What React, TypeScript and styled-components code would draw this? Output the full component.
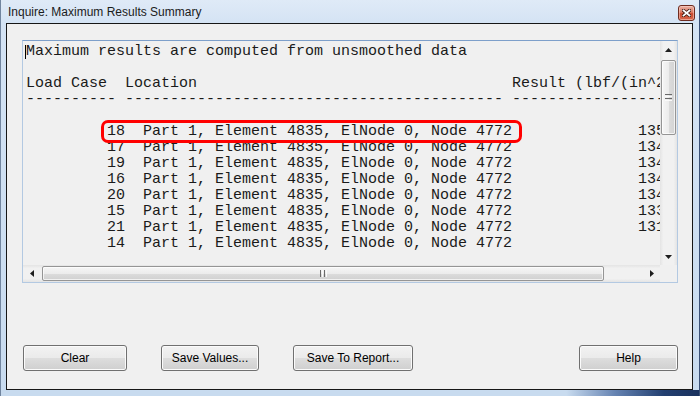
import React from 'react';
import styled, { createGlobalStyle } from 'styled-components';

const GlobalStyle = createGlobalStyle`
  html, body {
    margin: 0;
    padding: 0;
    background: #ffffff;
  }
  body {
    width: 700px;
    height: 396px;
    overflow: hidden;
  }
`;

const Window = styled.div`
  width: 700px;
  height: 396px;
  box-sizing: border-box;
  display: flex;
  flex-direction: column;
  border-left: 1px solid #71859f;
  border-right: 1px solid #3b5177;
  background:
    linear-gradient(to right, #c8dbef 0%, #c8dbef 81%, #6583b2 88%, #223f70 95%, #1a325e 100%) bottom / 100% 6px no-repeat,
    linear-gradient(to bottom, #dfeaf7 0%, #d4e3f4 24px, #c8dbef 100%);
`;

const TitleBar = styled.div`
  height: 23px;
  flex: none;
  display: flex;
  justify-content: space-between;
  align-items: flex-start;
  padding: 0 4px 0 7px;
`;

const Title = styled.span`
  margin-top: 5px;
  font-family: 'Liberation Sans', Arial, sans-serif;
  font-size: 12px;
  line-height: 15px;
  color: #1b1b1b;
`;

const CloseButton = styled.div`
  margin-top: 5px;
  width: 17px;
  height: 16px;
  box-sizing: border-box;
  border: 1px solid #6e2b1f;
  border-radius: 3px;
  background: linear-gradient(to bottom, #eab0a2 0%, #dc7c66 45%, #c9482d 55%, #d8694e 100%);
  box-shadow: inset 0 0 0 1px rgba(255, 220, 210, 0.5);
  display: flex;
  align-items: center;
  justify-content: center;
`;

const Body = styled.div`
  flex: 1;
  display: flex;
  padding: 0 6px 6px 5px;
  min-height: 0;
`;

const Content = styled.div`
  flex: 1;
  border: 1px solid #161616;
  background: #f0f0f0;
  display: flex;
  flex-direction: column;
  justify-content: space-between;
  padding: 16px 14px 18px 15px;
`;

const TextBox = styled.div`
  height: 243px;
  box-sizing: border-box;
  border: 1px solid #b3c9e2;
  border-top-color: #7d9fca;
  background: #f0f0f0;
  display: grid;
  grid-template-columns: 1fr 17px;
  grid-template-rows: 1fr 17px;
`;

const Listing = styled.div`
  position: relative;
  overflow: hidden;
  padding: 3px 0 0 3px;
  font-family: 'Liberation Mono', 'Courier New', monospace;
  font-size: 15px;
  line-height: 16px;
  white-space: pre;
  color: #1a1a1a;
`;

const Line = styled.div`
  height: 16px;
`;

const Caret = styled.span`
  display: inline-block;
  width: 1px;
  height: 14px;
  margin-left: -1px;
  margin-top: 1px;
  vertical-align: top;
  background: #000;
`;

const Highlight = styled.div`
  position: absolute;
  left: 78px;
  top: 79px;
  width: 421px;
  height: 23px;
  box-sizing: border-box;
  border: 3px solid #ff0000;
  border-radius: 7px;
  pointer-events: none;
`;

const VScroll = styled.div`
  display: flex;
  flex-direction: column;
  background: linear-gradient(to right, #e4e4e4 0%, #f1f1f1 20%, #f1f1f1 80%, #e4e4e4 100%);
`;

const HScroll = styled.div`
  display: flex;
  align-items: center;
  background: linear-gradient(to bottom, #e4e4e4 0%, #f1f1f1 20%, #f1f1f1 80%, #e4e4e4 100%);
`;

const Arrow = styled.div<{ $grow?: boolean }>`
  width: 17px;
  height: 17px;
  flex: none;
  display: flex;
  align-items: center;
  justify-content: center;
  margin-top: ${({ $grow }) => ($grow ? 'auto' : '0')};
  margin-left: ${({ $grow }) => ($grow ? 'auto' : '0')};
`;

const Thumb = styled.div<{ $vertical?: boolean; $length: number }>`
  box-sizing: border-box;
  border: 1px solid #959595;
  border-radius: 2px;
  display: flex;
  align-items: center;
  justify-content: center;
  ${({ $vertical, $length }) =>
    $vertical
      ? `
    width: 15px;
    height: ${$length}px;
    margin: 2px 1px 0;
    background: linear-gradient(to right, #f6f6f6 0%, #ececec 50%, #dcdcdc 51%, #d3d3d3 100%);
  `
      : `
    height: 15px;
    width: ${$length}px;
    margin-left: 2px;
    background: linear-gradient(to bottom, #f6f6f6 0%, #ececec 50%, #dcdcdc 51%, #d0d0d0 100%);
  `}
  box-shadow: inset 0 0 0 1px rgba(255, 255, 255, 0.7);
`;

const Corner = styled.div`
  background: #f0f0f0;
`;

const ButtonRow = styled.div`
  display: flex;
  gap: 34px;
  padding-left: 1px;
`;

const Button = styled.button<{ $width: number; $push?: boolean }>`
  width: ${({ $width }) => $width}px;
  height: 26px;
  box-sizing: border-box;
  margin: 0;
  margin-left: ${({ $push }) => ($push ? 'auto' : '0')};
  padding: 0;
  border: 1px solid #707070;
  border-radius: 3px;
  background: linear-gradient(to bottom, #f2f2f2 0%, #ebebeb 48%, #dddddd 52%, #cfcfcf 100%);
  box-shadow: inset 0 0 0 1px #fbfbfb;
  font-family: 'Liberation Sans', Arial, sans-serif;
  font-size: 12px;
  color: #000;
`;

const UpArrow = () => (
  <svg width="7" height="4" viewBox="0 0 7 4">
    <polygon points="3.5,0 7,4 0,4" fill="#1e1e1e" />
  </svg>
);

const DownArrow = () => (
  <svg width="7" height="4" viewBox="0 0 7 4">
    <polygon points="0,0 7,0 3.5,4" fill="#1e1e1e" />
  </svg>
);

const LeftArrow = () => (
  <svg width="4" height="7" viewBox="0 0 4 7">
    <polygon points="4,0 4,7 0,3.5" fill="#1e1e1e" />
  </svg>
);

const RightArrow = () => (
  <svg width="4" height="7" viewBox="0 0 4 7">
    <polygon points="0,0 4,3.5 0,7" fill="#1e1e1e" />
  </svg>
);

const Grip = ({ vertical }: { vertical?: boolean }) =>
  vertical ? (
    <svg width="7" height="7" viewBox="0 0 7 7">
      {[0, 2, 4, 6].map((y) => (
        <rect key={y} x="0" y={y} width="7" height="1" fill={y % 4 === 0 ? '#6a6a6a' : '#fafafa'} />
      ))}
    </svg>
  ) : (
    <svg width="7" height="7" viewBox="0 0 7 7">
      {[0, 2, 4, 6].map((x) => (
        <rect key={x} x={x} y="0" width="1" height="7" fill={x % 4 === 0 ? '#6a6a6a' : '#fafafa'} />
      ))}
    </svg>
  );

const rows = [
  { lc: '18', value: '1359.61' },
  { lc: '17', value: '1348.27' },
  { lc: '19', value: '1346.05' },
  { lc: '16', value: '1344.80' },
  { lc: '20', value: '1341.12' },
  { lc: '15', value: '1332.94' },
  { lc: '21', value: '1318.70' },
  { lc: '14', value: '   987.46' },
];

const location = 'Part 1, Element 4835, ElNode 0, Node 4772';
const header = 'Load Case  Location' + ' '.repeat(35) + 'Result (lbf/(in^2))';
const rule = '-'.repeat(10) + ' ' + '-'.repeat(42) + ' ' + '-'.repeat(24);

export default function App() {
  return (
    <>
      <GlobalStyle />
      <Window>
        <TitleBar>
          <Title>Inquire: Maximum Results Summary</Title>
          <CloseButton>
            <svg width="9" height="8" viewBox="0 0 9 8">
              <path d="M1.5 1.5 L7.5 6.5 M7.5 1.5 L1.5 6.5" stroke="#3b1810" strokeWidth="3.4" strokeLinecap="square" />
              <path d="M1.5 1.5 L7.5 6.5 M7.5 1.5 L1.5 6.5" stroke="#ffffff" strokeWidth="1.8" strokeLinecap="square" />
            </svg>
          </CloseButton>
        </TitleBar>
        <Body>
          <Content>
            <TextBox>
              <Listing>
                <Line>
                  <Caret />
                  Maximum results are computed from unsmoothed data
                </Line>
                <Line />
                <Line>{header}</Line>
                <Line>{rule}</Line>
                <Line />
                {rows.map((r) => (
                  <Line key={r.lc}>
                    {' '.repeat(9) + r.lc + '  ' + location + ' '.repeat(14) + r.value}
                  </Line>
                ))}
                <Highlight />
              </Listing>
              <VScroll>
                <Arrow>
                  <UpArrow />
                </Arrow>
                <Thumb $vertical $length={75}>
                  <Grip vertical />
                </Thumb>
                <Arrow $grow>
                  <DownArrow />
                </Arrow>
              </VScroll>
              <HScroll>
                <Arrow>
                  <LeftArrow />
                </Arrow>
                <Thumb $length={562}>
                  <Grip />
                </Thumb>
                <Arrow $grow>
                  <RightArrow />
                </Arrow>
              </HScroll>
              <Corner />
            </TextBox>
            <ButtonRow>
              <Button $width={104}>Clear</Button>
              <Button $width={98}>Save Values...</Button>
              <Button $width={120}>Save To Report...</Button>
              <Button $width={99} $push>
                Help
              </Button>
            </ButtonRow>
          </Content>
        </Body>
      </Window>
    </>
  );
}
